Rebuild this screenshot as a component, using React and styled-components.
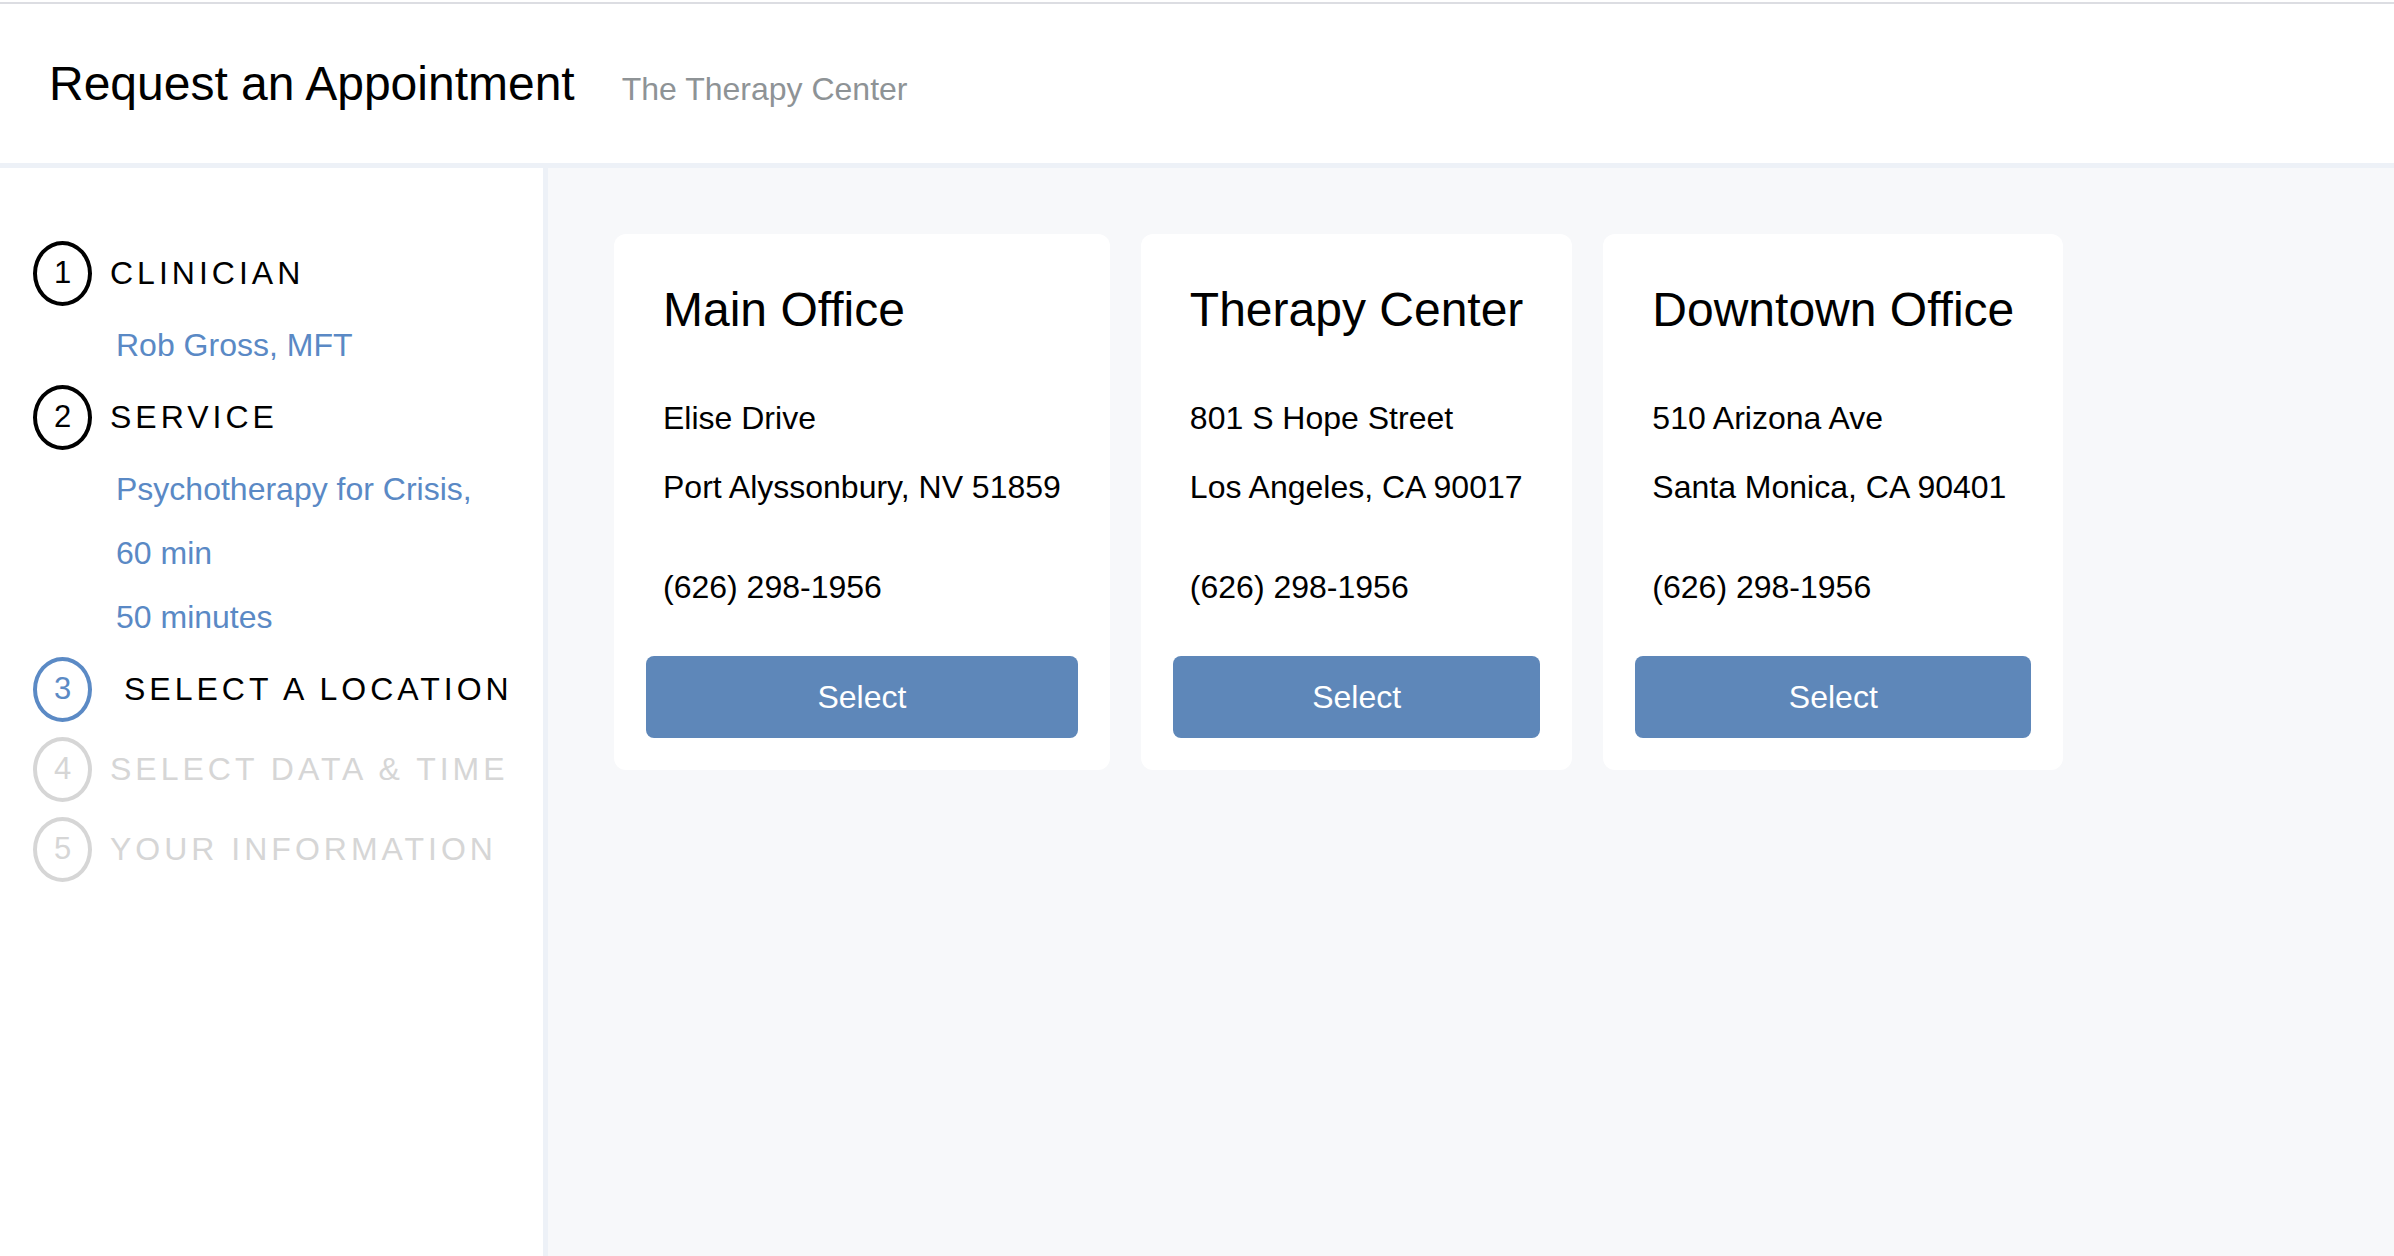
import React from "react";
import styled, { createGlobalStyle } from "styled-components";

const GlobalStyle = createGlobalStyle`
  body {
    margin: 0;
    background: #fff;
    font-family: "Liberation Sans", Arial, Helvetica, sans-serif;
  }
`;

const Page = styled.div`
  min-height: 100vh;
  padding-top: 2px;
  box-sizing: border-box;
  display: flex;
  flex-direction: column;
`;

const Header = styled.header`
  height: 166px;
  box-sizing: border-box;
  border-top: 2px solid #dcdde2;
  border-bottom: 5px solid #edf1f7;
  padding: 52px 49px 0;
  display: flex;
  align-items: baseline;
  gap: 47px;
`;

const Title = styled.h1`
  margin: 0;
  font-size: 48px;
  font-weight: 400;
  line-height: 56px;
  color: #000;
`;

const Subtitle = styled.span`
  font-size: 32px;
  color: #8e9396;
`;

const Body = styled.div`
  flex: 1;
  display: flex;
`;

const Sidebar = styled.aside`
  width: 548px;
  flex-shrink: 0;
  border-right: 5px solid #edf1f7;
  padding: 65px 0 0 33px;
  box-sizing: border-box;
  background: #fff;
  display: flex;
  flex-direction: column;
`;

const stepColors = {
  done: { ring: "#000", text: "#000" },
  active: { ring: "#5b8ac5", text: "#000" },
  todo: { ring: "#d6d6d6", text: "#d6d6d6" },
};

const StepRow = styled.div`
  display: flex;
  align-items: center;
  gap: ${(p) => (p.$state === "active" ? "32px" : "18px")};
  margin: 7.5px 0;
`;

const Circle = styled.div`
  width: 59px;
  height: 65px;
  box-sizing: border-box;
  border-radius: 50%;
  border: 4px solid ${(p) => stepColors[p.$state].ring};
  color: ${(p) => (p.$state === "active" ? "#5b8ac5" : stepColors[p.$state].ring)};
  display: flex;
  align-items: center;
  justify-content: center;
  font-size: 31px;
  flex-shrink: 0;
`;

const StepLabel = styled.span`
  font-size: 32px;
  letter-spacing: 4px;
  white-space: nowrap;
  color: ${(p) => stepColors[p.$state].text};
`;

const Details = styled.div`
  padding-left: 83px;
`;

const DetailLine = styled.div`
  font-size: 32px;
  line-height: 64px;
  color: #5a89c5;
  white-space: nowrap;
`;

const Main = styled.main`
  flex: 1;
  background: #f7f8fa;
  padding: 66px 0 0 66px;
  display: flex;
  align-items: flex-start;
  gap: 31px;
`;

const Card = styled.div`
  background: #fff;
  border-radius: 12px;
  padding: 32px;
  display: flex;
  flex-direction: column;
`;

const CardText = styled.div`
  padding: 16px 17px 0;
`;

const CardTitle = styled.h2`
  margin: 0 0 60px;
  font-size: 48px;
  font-weight: 400;
  line-height: 56px;
  color: #000;
  white-space: nowrap;
`;

const Address = styled.div`
  display: flex;
  flex-direction: column;
  gap: 29px;
`;

const Line = styled.div`
  font-size: 32px;
  line-height: 40px;
  color: #000;
  white-space: nowrap;
`;

const Phone = styled(Line)`
  margin-top: 60px;
`;

const SelectButton = styled.button`
  margin-top: 49px;
  height: 82px;
  border: none;
  border-radius: 8px;
  background: #5e87b9;
  color: #fff;
  font-family: inherit;
  font-size: 32px;
  cursor: pointer;
`;

const steps = [
  { n: 1, label: "CLINICIAN", state: "done", details: ["Rob Gross, MFT"] },
  {
    n: 2,
    label: "SERVICE",
    state: "done",
    details: ["Psychotherapy for Crisis,", "60 min", "50 minutes"],
  },
  { n: 3, label: "SELECT A LOCATION", state: "active" },
  { n: 4, label: "SELECT DATA & TIME", state: "todo" },
  { n: 5, label: "YOUR INFORMATION", state: "todo" },
];

const locations = [
  {
    name: "Main Office",
    street: "Elise Drive",
    city: "Port Alyssonbury, NV 51859",
    phone: "(626) 298-1956",
  },
  {
    name: "Therapy Center",
    street: "801 S Hope Street",
    city: "Los Angeles, CA 90017",
    phone: "(626) 298-1956",
  },
  {
    name: "Downtown Office",
    street: "510 Arizona Ave",
    city: "Santa Monica, CA 90401",
    phone: "(626) 298-1956",
  },
];

const App = () => (
  <Page>
    <GlobalStyle />
    <Header>
      <Title>Request an Appointment</Title>
      <Subtitle>The Therapy Center</Subtitle>
    </Header>

    <Body>
      {/* Progress through the booking steps */}
      <Sidebar>
        {steps.map((s) => (
          <React.Fragment key={s.n}>
            <StepRow $state={s.state}>
              <Circle $state={s.state}>{s.n}</Circle>
              <StepLabel $state={s.state}>{s.label}</StepLabel>
            </StepRow>
            {s.details && (
              <Details>
                {s.details.map((d) => (
                  <DetailLine key={d}>{d}</DetailLine>
                ))}
              </Details>
            )}
          </React.Fragment>
        ))}
      </Sidebar>

      {/* Location cards */}
      <Main>
        {locations.map((loc) => (
          <Card key={loc.name}>
            <CardText>
              <CardTitle>{loc.name}</CardTitle>
              <Address>
                <Line>{loc.street}</Line>
                <Line>{loc.city}</Line>
              </Address>
              <Phone>{loc.phone}</Phone>
            </CardText>
            <SelectButton>Select</SelectButton>
          </Card>
        ))}
      </Main>
    </Body>
  </Page>
);

export default App;
